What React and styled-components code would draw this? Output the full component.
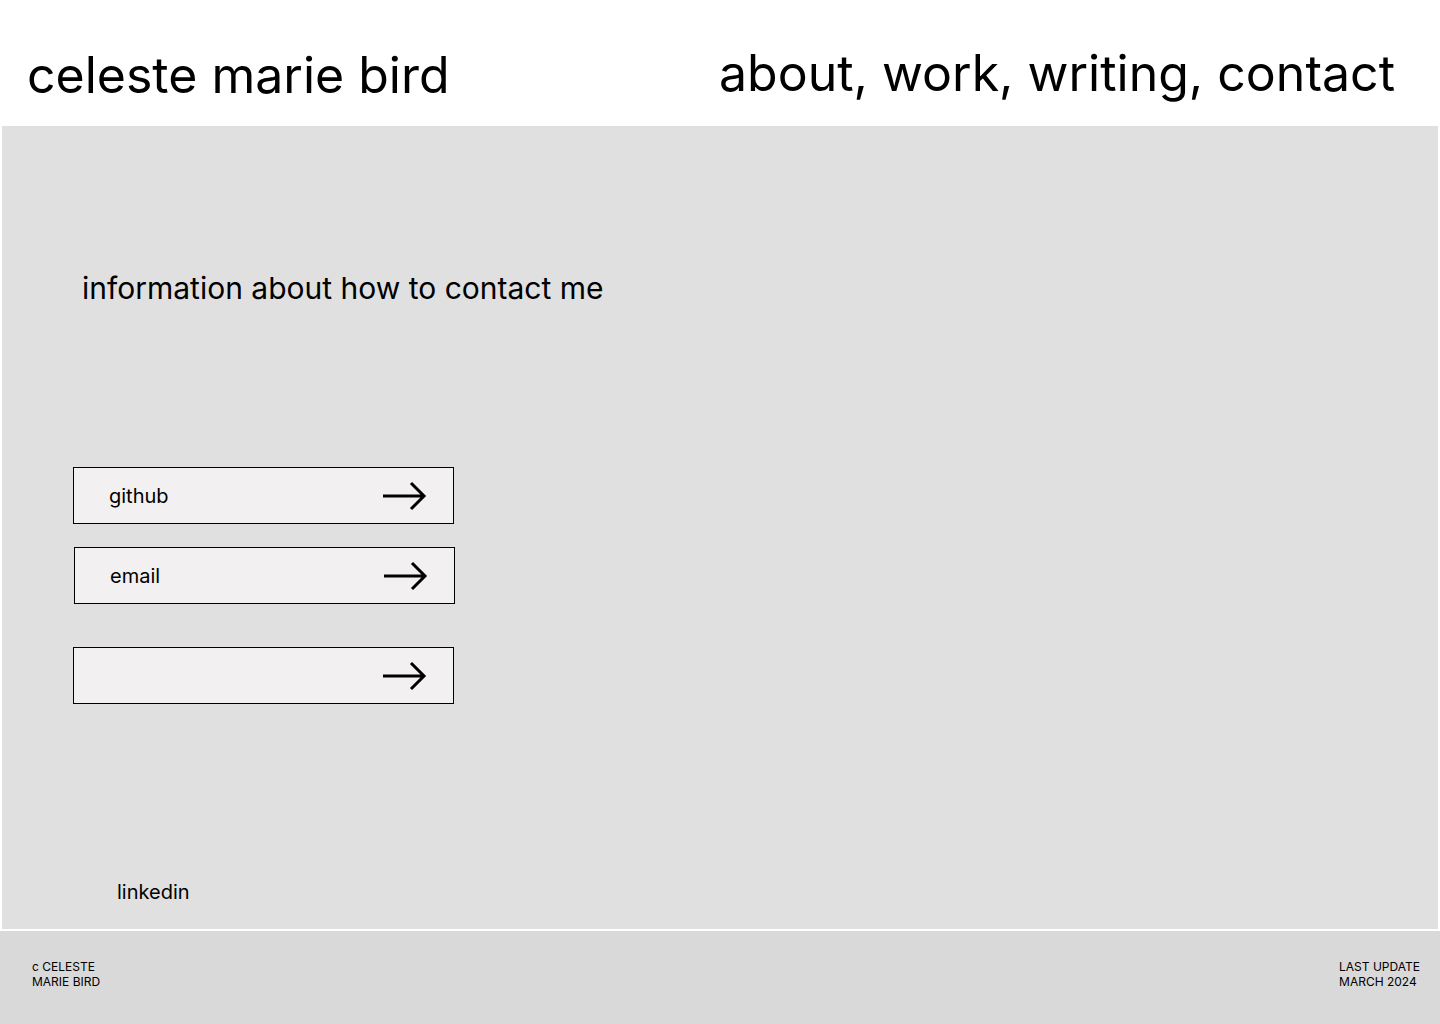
import React from "react";
import styled, { createGlobalStyle } from "styled-components";

const Global = createGlobalStyle`
  html, body { margin: 0; padding: 0; background: #ffffff; }
  body { font-family: Inter, "Noto Sans", sans-serif; color: #000; }
  * { box-sizing: border-box; }
`;

const Page = styled.div`
  width: 1440px;
  min-height: 1024px;
  display: flex;
  flex-direction: column;
`;

const Header = styled.header`
  height: 126px;
  display: flex;
  align-items: flex-end;
  justify-content: space-between;
  padding: 0 45px 26px 27px;
`;

const Title = styled.h1`
  margin: 0;
  font-family: Inter, sans-serif;
  font-weight: 400;
  font-size: 50px;
  line-height: 1;
`;

const Nav = styled.nav`
  font-family: Inter, sans-serif;
  font-weight: 400;
  font-size: 50px;
  line-height: 1;
  margin-bottom: 2px;
`;

const Panel = styled.main`
  margin: 0 2px;
  height: 803px;
  background: #e0e0e0;
  display: flex;
  flex-direction: column;
  padding: 144px 0 0 71px;
`;

const Heading = styled.h2`
  margin: 0 0 161px 9px;
  font-weight: 400;
  font-size: 30px;
  line-height: 36px;
`;

const LinkBox = styled.a`
  width: 381px;
  height: 57px;
  border: 1px solid #000;
  background: #f2f0f1;
  display: flex;
  align-items: center;
  justify-content: space-between;
  padding: 0 26px 0 35px;
  color: #000;
  text-decoration: none;
  font-size: 20px;
  margin-left: ${(p) => p.$shift || 0}px;
  margin-bottom: ${(p) => p.$gap || 0}px;
`;

const Label = styled.span`
  line-height: 24px;
  padding-top: 1px;
`;

const Linkedin = styled.div`
  margin: 0 0 0 44px;
  font-size: 20px;
  line-height: 24px;
`;

const Footer = styled.footer`
  margin-top: 2px;
  height: 93px;
  background: #d9d9d9;
  display: flex;
  justify-content: space-between;
  padding: 28px 20px 0 32px;
  font-size: 12px;
  line-height: 15px;
`;

const Note = styled.div``;

const Arrow = () => (
  <svg width="44" height="30" viewBox="0 0 44 30" fill="none">
    <path d="M0 15 H41 M28 2 L41 15 L28 28" stroke="#000" strokeWidth="3" />
  </svg>
);

export default function App() {
  return (
    <Page>
      <Global />
      <Header>
        <Title>celeste marie bird</Title>
        <Nav>about, work, writing, contact</Nav>
      </Header>
      <Panel>
        <Heading>information about how to contact me</Heading>
        <LinkBox $gap={23}>
          <Label>github</Label>
          <Arrow />
        </LinkBox>
        <LinkBox $shift={1} $gap={43}>
          <Label>email</Label>
          <Arrow />
        </LinkBox>
        <LinkBox $gap={176}>
          <Label></Label>
          <Arrow />
        </LinkBox>
        <Linkedin>linkedin</Linkedin>
      </Panel>
      <Footer>
        <Note>
          c CELESTE
          <br />
          MARIE BIRD
        </Note>
        <Note>
          LAST UPDATE
          <br />
          MARCH 2024
        </Note>
      </Footer>
    </Page>
  );
}
